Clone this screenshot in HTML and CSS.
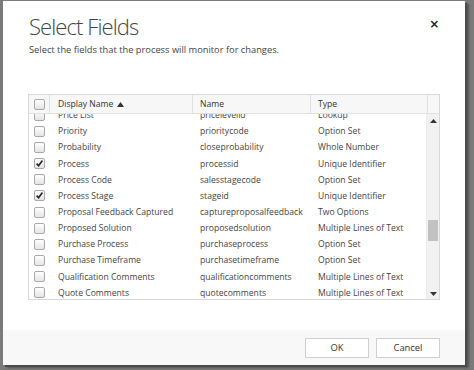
FILE: index.html
```html
<!DOCTYPE html>
<html>
<head>
<meta charset="utf-8">
<link rel="stylesheet" href="styles.css">
</head>
<body>
<div class="dialog">
  <div class="head">
    <div class="title-row">
      <h1 class="title">Select Fields</h1>
      <span class="close">×</span>
    </div>
    <p class="subtitle">Select the fields that the process will monitor for changes.</p>
  </div>
  <div class="grid">
    <div class="grid-head">
      <div class="c-chk"><span class="cb"></span></div>
      <div class="c-disp">Display Name <svg class="sort" width="7" height="5" viewBox="0 0 7 5"><path d="M0 5 L3.5 0 L7 5 Z" fill="#333"/></svg></div>
      <div class="c-name">Name</div>
      <div class="c-type">Type</div>
      <div class="c-sb"></div>
    </div>
    <div class="grid-body">
      <div class="rows-view">
        <div class="rows">
          <div class="row"><div class="c-chk"><span class="cb"></span></div><div class="c-disp">Price List</div><div class="c-name">pricelevelid</div><div class="c-type">Lookup</div></div>
          <div class="row"><div class="c-chk"><span class="cb"></span></div><div class="c-disp">Priority</div><div class="c-name">prioritycode</div><div class="c-type">Option Set</div></div>
          <div class="row"><div class="c-chk"><span class="cb"></span></div><div class="c-disp">Probability</div><div class="c-name">closeprobability</div><div class="c-type">Whole Number</div></div>
          <div class="row"><div class="c-chk"><span class="cb on"><svg width="9" height="9" viewBox="0 0 9 9"><path d="M1.6 4.6 L3.6 6.7 L7.4 1.6" fill="none" stroke="#222" stroke-width="1.6"/></svg></span></div><div class="c-disp">Process</div><div class="c-name">processid</div><div class="c-type">Unique Identifier</div></div>
          <div class="row"><div class="c-chk"><span class="cb"></span></div><div class="c-disp">Process Code</div><div class="c-name">salesstagecode</div><div class="c-type">Option Set</div></div>
          <div class="row"><div class="c-chk"><span class="cb on"><svg width="9" height="9" viewBox="0 0 9 9"><path d="M1.6 4.6 L3.6 6.7 L7.4 1.6" fill="none" stroke="#222" stroke-width="1.6"/></svg></span></div><div class="c-disp">Process Stage</div><div class="c-name">stageid</div><div class="c-type">Unique Identifier</div></div>
          <div class="row"><div class="c-chk"><span class="cb"></span></div><div class="c-disp">Proposal Feedback Captured</div><div class="c-name">captureproposalfeedback</div><div class="c-type">Two Options</div></div>
          <div class="row"><div class="c-chk"><span class="cb"></span></div><div class="c-disp">Proposed Solution</div><div class="c-name">proposedsolution</div><div class="c-type">Multiple Lines of Text</div></div>
          <div class="row"><div class="c-chk"><span class="cb"></span></div><div class="c-disp">Purchase Process</div><div class="c-name">purchaseprocess</div><div class="c-type">Option Set</div></div>
          <div class="row"><div class="c-chk"><span class="cb"></span></div><div class="c-disp">Purchase Timeframe</div><div class="c-name">purchasetimeframe</div><div class="c-type">Option Set</div></div>
          <div class="row"><div class="c-chk"><span class="cb"></span></div><div class="c-disp">Qualification Comments</div><div class="c-name">qualificationcomments</div><div class="c-type">Multiple Lines of Text</div></div>
          <div class="row"><div class="c-chk"><span class="cb"></span></div><div class="c-disp">Quote Comments</div><div class="c-name">quotecomments</div><div class="c-type">Multiple Lines of Text</div></div>
          <div class="row"><div class="c-chk"><span class="cb"></span></div><div class="c-disp">Rating</div><div class="c-name">opportunityratingcode</div><div class="c-type">Option Set</div></div>
        </div>
      </div>
      <div class="scrollbar">
        <svg class="arr" width="7" height="4" viewBox="0 0 7 4"><path d="M0 4 L3.5 0 L7 4 Z" fill="#333"/></svg>
        <div class="track"><div class="thumb"></div></div>
        <svg class="arr" width="7" height="4" viewBox="0 0 7 4"><path d="M0 0 L3.5 4 L7 0 Z" fill="#333"/></svg>
      </div>
    </div>
  </div>
  <div class="spacer"></div>
  <div class="footer">
    <button class="btn ok">OK</button>
    <button class="btn">Cancel</button>
  </div>
</div>
</body>
</html>
```

FILE: styles.css
```css
html, body {
  margin: 0;
  padding: 0;
}
body {
  width: 474px;
  height: 370px;
  overflow: hidden;
  background: #7b7b7b;
  padding: 1px 0 0 3px;
  box-sizing: border-box;
  font-family: "Open Sans", "Noto Sans", sans-serif;
  color: #444;
}
.dialog {
  width: 462px;
  height: 364px;
  background: #fff;
  display: flex;
  flex-direction: column;
  box-shadow: 2px 2px 0 #4a4a4a, 4px 3px 2px #555;
}
.head {
  padding: 10px 0 0 26px;
}
.title-row {
  display: flex;
  align-items: center;
  justify-content: space-between;
  padding-right: 26px;
  height: 30px;
}
.title {
  margin: 0;
  font-weight: 300;
  font-size: 22px;
  letter-spacing: -0.9px;
  color: #444;
}
.close {
  font-size: 16px;
  font-weight: 600;
  color: #222;
  margin-top: -4px;
}
.subtitle {
  margin: 2px 0 0;
  font-size: 9.3px;
  color: #444;
}
.grid {
  margin: 38px 0 0 25px;
  width: 412px;
  border: 1px solid #d8d8d8;
  box-sizing: border-box;
  font-size: 8.6px;
}
.grid-head {
  display: flex;
  height: 18px;
  background: #f7f7f7;
  border-bottom: 1px solid #e2e2e2;
  color: #333;
}
.grid-head > div {
  display: flex;
  align-items: center;
  border-right: 1px solid #e0e0e0;
  box-sizing: border-box;
}
.grid-head > .c-sb {
  border-right: none;
}
.c-chk {
  width: 21px;
  flex: none;
  display: flex;
  align-items: center;
  justify-content: center;
}
.c-disp {
  width: 143px;
  flex: none;
  padding-left: 8px;
  box-sizing: border-box;
}
.c-name {
  width: 118px;
  flex: none;
  padding-left: 7px;
  box-sizing: border-box;
}
.c-type {
  width: 117px;
  flex: none;
  padding-left: 7px;
  box-sizing: border-box;
}
.c-sb {
  flex: 1;
}
.sort {
  margin-left: 4px;
}
.grid-body {
  display: flex;
  height: 185px;
}
.rows-view {
  width: 397px;
  overflow: hidden;
}
.rows {
  margin-top: -7px;
}
.row {
  display: flex;
  align-items: center;
  height: 16.17px;
  white-space: nowrap;
  color: #444;
}
.row > div {
  display: flex;
  align-items: center;
}
.cb {
  width: 9px;
  height: 9px;
  border: 1px solid #a9a9a9;
  border-radius: 2px;
  background: linear-gradient(#ffffff, #e4e4e4);
  display: flex;
  align-items: center;
  justify-content: center;
}
.cb svg {
  display: block;
}
.scrollbar {
  width: 13px;
  background: #f1f1f1;
  border-left: 1px solid #ececec;
  display: flex;
  flex-direction: column;
  align-items: center;
  padding: 5px 0 3px;
  box-sizing: border-box;
}
.track {
  flex: 1;
  width: 100%;
  padding-top: 97px;
  box-sizing: border-box;
}
.thumb {
  width: 10px;
  height: 21px;
  margin: 0 auto;
  background: #c2c2c2;
}
.spacer {
  flex: 1;
}
.footer {
  height: 35px;
  background: #f8f8f8;
  display: flex;
  align-items: center;
  justify-content: flex-end;
  gap: 7px;
  padding-right: 25px;
}
.btn {
  width: 64px;
  height: 20px;
  background: #fff;
  border: 1px solid #cfcfcf;
  font-family: "Open Sans", "Noto Sans", sans-serif;
  font-size: 9.4px;
  color: #333;
  padding: 0;
}
```
